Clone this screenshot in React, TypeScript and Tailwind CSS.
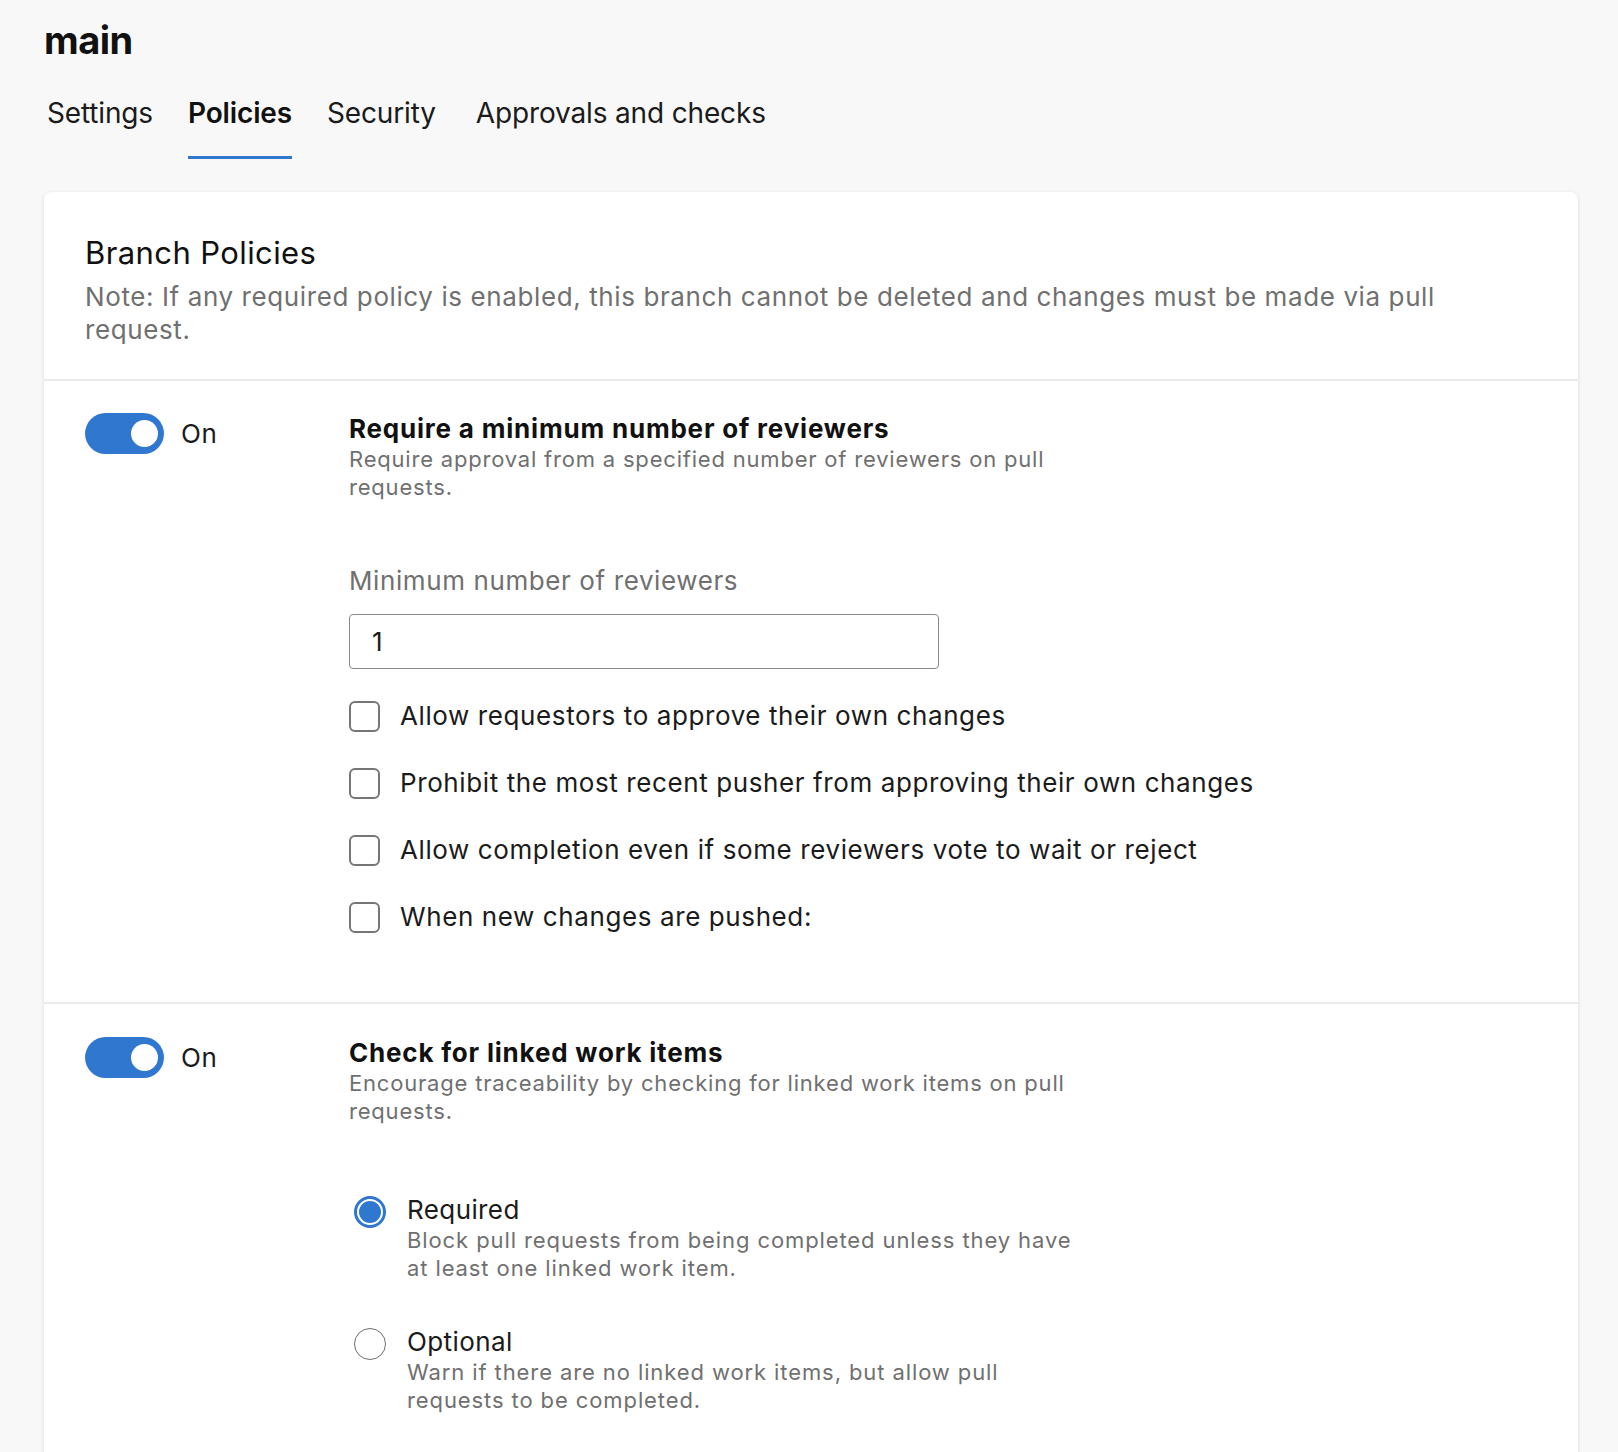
import { useState } from "react";

function Toggle({ on }: { on: boolean }) {
  return (
    <div className="flex items-center">
      <div
        className={`flex h-[41px] w-[79px] items-center rounded-full px-[6px] ${
          on ? "justify-end bg-[#3077d0]" : "justify-start border-2 border-[#707070] bg-white"
        }`}
      >
        <div className={`h-[27px] w-[27px] rounded-full ${on ? "bg-white" : "bg-[#707070]"}`} />
      </div>
      <span className="ml-[17px] text-[26px] leading-[41px] tracking-[0.6px] text-[#1b1b1b]">{on ? "On" : "Off"}</span>
    </div>
  );
}

function Checkbox({ label }: { label: string }) {
  return (
    <div className="flex h-[34px] items-center">
      <div className="h-[31px] w-[31px] rounded-[6px] border-2 border-[#767676] bg-white" />
      <span className="ml-[20px] text-[26px] leading-[34px] tracking-[0.6px] text-[#1b1b1b]">{label}</span>
    </div>
  );
}

function Radio({ selected, title, lines }: { selected: boolean; title: string; lines: string[] }) {
  return (
    <div className="flex items-start">
      {selected ? (
        <div className="mt-[2px] h-[32px] w-[32px] shrink-0 rounded-full border-[3px] border-[#3077d0] p-[2px]">
          <div className="h-full w-full rounded-full bg-[#3077d0]" />
        </div>
      ) : (
        <div className="mt-[2px] h-[32px] w-[32px] shrink-0 rounded-full border-[1.5px] border-[#707070]" />
      )}
      <div className="ml-[21px]">
        <div className="text-[26px] leading-[32px] tracking-[0.4px] text-[#1b1b1b]">{title}</div>
        <div className="text-[22px] leading-[28px] tracking-[0.9px] text-[#707070]">
          {lines.map((l) => (
            <div key={l}>{l}</div>
          ))}
        </div>
      </div>
    </div>
  );
}

export default function App() {
  const [tab] = useState("Policies");
  const tabs = ["Settings", "Policies", "Security", "Approvals and checks"];

  return (
    <div className="min-h-screen bg-[#f8f8f8] pl-[44px] pr-[40px] pt-[17px] font-['Inter',sans-serif] text-[#1b1b1b]">
      <h1 className="text-[38px] font-bold leading-[46px] tracking-[-0.5px] text-[#111]">main</h1>

      <nav className="mt-[32px] flex gap-[35px] pl-[3px]">
        {tabs.map((t) => (
          <div
            key={t}
            className={`pb-[25px] text-[28px] leading-[36px] tracking-[-0.15px] ${
              t === "Approvals and checks" ? "ml-[5px]" : ""
            } ${t === tab ? "border-b-[3px] border-[#3077d0] font-semibold text-[#111]" : "border-b-[3px] border-transparent"}`}
          >
            {t}
          </div>
        ))}
      </nav>

      <div className="mt-[33px] rounded-[8px] bg-white pb-[80px] shadow-[0_1px_4px_rgba(0,0,0,0.12)]">
        <div className="border-b-2 border-[#ebebeb] px-[41px] pb-[33px] pt-[41px]">
          <h2 className="text-[31px] leading-[40px] tracking-[0.4px] text-[#111]">Branch Policies</h2>
          <p className="mt-[7px] text-[26px] leading-[33px] tracking-[0.6px] text-[#707070]">
            Note: If any required policy is enabled, this branch cannot be deleted and changes must be made via pull
            <br />
            request.
          </p>
        </div>

        <div className="flex border-b-2 border-[#ebebeb] px-[41px] pb-[68px] pt-[32px]">
          <div className="w-[264px] shrink-0">
            <Toggle on />
          </div>
          <div>
            <div className="text-[26px] font-bold leading-[32px] tracking-[0.8px] text-[#111]">
              Require a minimum number of reviewers
            </div>
            <div className="text-[22px] leading-[28px] tracking-[0.8px] text-[#707070]">
              <div>Require approval from a specified number of reviewers on pull</div>
              <div>requests.</div>
            </div>

            <div className="mt-[64px] text-[26px] leading-[32px] tracking-[0.6px] text-[#707070]">
              Minimum number of reviewers
            </div>
            <div className="mt-[17px] flex h-[55px] w-[590px] items-center rounded-[4px] border-[1.5px] border-[#8a8a8a] px-[22px] text-[26px]">
              1
            </div>

            <div className="mt-[30px] flex flex-col gap-[33px]">
              <Checkbox label="Allow requestors to approve their own changes" />
              <Checkbox label="Prohibit the most recent pusher from approving their own changes" />
              <Checkbox label="Allow completion even if some reviewers vote to wait or reject" />
              <Checkbox label="When new changes are pushed:" />
            </div>
          </div>
        </div>

        <div className="flex px-[41px] pt-[33px]">
          <div className="w-[264px] shrink-0">
            <Toggle on />
          </div>
          <div>
            <div className="text-[26px] font-bold leading-[32px] tracking-[0.8px] text-[#111]">
              Check for linked work items
            </div>
            <div className="text-[22px] leading-[28px] tracking-[0.8px] text-[#707070]">
              <div>Encourage traceability by checking for linked work items on pull</div>
              <div>requests.</div>
            </div>

            <div className="ml-[5px] mt-[69px] flex flex-col gap-[44px]">
              <Radio
                selected
                title="Required"
                lines={["Block pull requests from being completed unless they have", "at least one linked work item."]}
              />
              <Radio
                selected={false}
                title="Optional"
                lines={["Warn if there are no linked work items, but allow pull", "requests to be completed."]}
              />
            </div>
          </div>
        </div>
      </div>
    </div>
  );
}
